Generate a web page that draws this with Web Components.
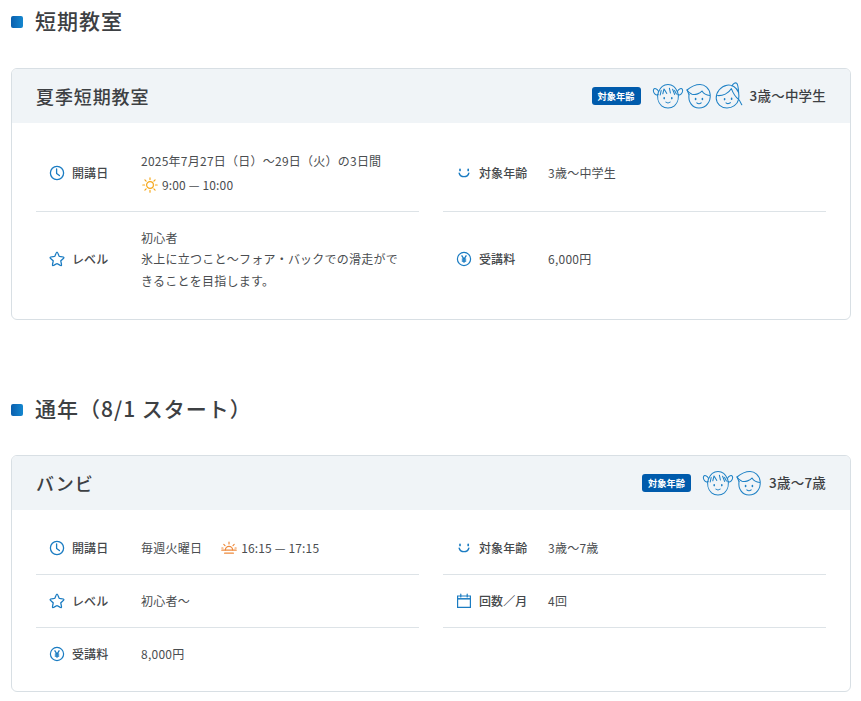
<!DOCTYPE html>
<html lang="ja">
<head>
<meta charset="utf-8">
<title>教室</title>
<style>
  html, body { margin: 0; background: #fff; }
  body {
    padding: 0 10px 8px 11px;
    font-family: "Noto Sans CJK JP", "Noto Sans", sans-serif;
    color: #3d4043;
  }
  .inline .time { display: inline-flex; align-items: center; gap: 4px; margin-left: 19px; letter-spacing: .15px; }
</style>
</head>
<body>
  <section-title style="--top: 5px">短期教室</section-title>
  <course-card title="夏季短期教室" faces="girl boy teen" age="3歳〜中学生" style="--mt: 33px; --pb: 13px; --row-pad: 15px">
    <info-row icon="clock" label="開講日">
      <div>2025年7月27日（日）〜29日（火）の3日間</div>
      <div class="time"><ui-icon name="sun"></ui-icon>9:00 — 10:00</div>
    </info-row>
    <info-row icon="smile" label="対象年齢">3歳〜中学生</info-row>
    <info-row icon="star" label="レベル" last>
      <div>初心者</div>
      <div>氷上に立つこと〜フォア・バックでの滑走ができることを目指します。</div>
    </info-row>
    <info-row icon="yen" label="受講料" last>6,000円</info-row>
  </course-card>

  <section-title style="--top: 72.6px">通年（8/1 スタート）</section-title>
  <course-card title="バンビ" faces="girl boy" age="3歳〜7歳" style="--mt: 32px; --pb: 11px">
    <info-row icon="clock" label="開講日">
      <span class="inline">毎週火曜日<span class="time"><ui-icon name="sunset"></ui-icon>16:15 — 17:15</span></span>
    </info-row>
    <info-row icon="smile" label="対象年齢">3歳〜7歳</info-row>
    <info-row icon="star" label="レベル">初心者〜</info-row>
    <info-row icon="calendar" label="回数／月">4回</info-row>
    <info-row icon="yen" label="受講料" last>8,000円</info-row>
  </course-card>

<script>
const ICONS = {
  clock: '<svg viewBox="0 0 16 16" width="16" height="16" fill="none" stroke="#1b7cc2" stroke-width="1.3"><circle cx="8" cy="8" r="6.6"/><path d="M7.6 3.8V8.4L10.4 10.6" stroke-linecap="round" stroke-linejoin="round"/></svg>',
  smile: '<svg viewBox="0 0 16 16" width="16" height="16" fill="none" stroke="#1b7cc2" stroke-width="1.4" stroke-linecap="round"><path d="M3.2 8.2C4.5 12.8 11.5 12.8 12.8 8.2"/><path d="M4 4.4V5.4M12.2 4.4V5.4" stroke-width="1.7"/></svg>',
  star: '<svg viewBox="0 0 16 16" width="16" height="16" fill="none" stroke="#1b7cc2" stroke-width="1.3" stroke-linejoin="round"><path d="M8 1.2C8.7 1.2 9.9 5 10.2 5.3C10.6 5.6 14.8 5.6 15 6.4C15.2 7.1 12 9.3 11.8 9.8C11.6 10.3 13 14 12.4 14.5C11.8 15 8.6 12.6 8 12.6C7.4 12.6 4.2 15 3.6 14.5C3 14 4.4 10.3 4.2 9.8C4 9.3 .8 7.1 1 6.4C1.2 5.6 5.4 5.6 5.8 5.3C6.1 5 7.3 1.2 8 1.2Z"/></svg>',
  yen: '<svg viewBox="0 0 16 16" width="16" height="16" fill="none" stroke="#1b7cc2" stroke-width="1.2"><circle cx="8" cy="8" r="6.6"/><path d="M5.6 4.4L8 8L10.4 4.4M8 8V11.8M5.8 8.2H10.2M5.8 10H10.2" stroke-width="1.3"/></svg>',
  calendar: '<svg viewBox="0 0 16 16" width="16" height="16" fill="none" stroke="#1b7cc2" stroke-width="1.2"><path d="M1.6 3H14.4V14.4H1.6Z"/><path d="M1.6 5.8H14.4" stroke-width="1.5"/><path d="M4.8 1.2V4M11.2 1.2V4" stroke-linecap="round"/></svg>',
  sun: '<svg viewBox="0 0 16 16" width="16" height="16" fill="none" stroke="#f5a81c" stroke-width="1.2" stroke-linecap="round"><circle cx="8" cy="8" r="3.4"/><path d="M8 .8V2.6M8 13.4V15.2M.8 8H2.6M13.4 8H15.2M2.9 2.9L4.1 4.1M11.9 11.9L13.1 13.1M2.9 13.1L4.1 11.9M11.9 4.1L13.1 2.9"/></svg>',
  sunset: '<svg viewBox="0 0 16 16" width="16" height="16" fill="none" stroke="#ee8a3c" stroke-width="1.2" stroke-linecap="round"><path d="M4.4 10A3.6 3.6 0 0 1 11.6 10"/><path d="M.8 10.2H15.2M3.6 13.2H12.4"/><path d="M8 2V4M2.8 4.4L4 5.6M13.2 4.4L12 5.6M.8 8H2M14 8H15.2"/></svg>'
};

// 似顔絵は線だけで描く
const FACES = {
  girl: { w: 30, svg: `
    <path d="M5.4 9C7.4 4 11.4 1.4 15 1.4C18.6 1.4 22.6 4 24.6 9C26.2 14 25 19.6 21.4 22.8C17.8 25.8 12.2 25.8 8.6 22.8C5 19.6 3.8 14 5.4 9Z"/>
    <path d="M5.6 8.4C4 5.4 1.4 4.8 .6 6.4C-.2 8 1 11 3 11.8C4 12.2 4.6 12 5 11.4"/>
    <path d="M24.4 8.4C26 5.4 28.6 4.8 29.4 6.4C30.2 8 29 11 27 11.8C26 12.2 25.4 12 25 11.4"/>
    <path d="M8.2 7.4L7.2 12M11 6L9.8 10.8M11.4 6.4L13.8 10.4M16.4 5.2L17.4 10M19.6 6.2L21.6 11.4M21.6 7.4L23.4 11"/>
    <path d="M11.2 14.8V15.6M18.8 14.8V15.6" stroke-width="1.6"/>
    <path d="M12.8 19C14 20.2 16 20.2 17.2 19"/>` },
  boy: { w: 26, svg: `
    <path d="M3 11.6C2 18.4 6 25 13 25C20.4 25 24.8 18.4 24.2 11.6C23.6 5 18.6 1.4 14 1.4C9.6 1.4 5 3.6 1 7C2.4 9.2 4 10.6 6 11.2C9.6 12 14 10.6 16 8C17.6 10.6 20.8 12.2 23.8 12.4"/>
    <path d="M3 11.6L1 7"/>
    <path d="M9.6 15.6V16.4M16.4 15.6V16.4" stroke-width="1.6"/>
    <path d="M10.8 19.8C12 21 14 21 15.2 19.8"/>` },
  teen: { w: 28, svg: `
    <path d="M23.6 9.6C21.6 4 16.6 1.4 12 2.2C6 3.2 1 9 1.2 15.2C1.4 21 6.6 25 12 25C17.4 25 22.4 21.6 23.6 16.4"/>
    <path d="M2.6 12.6C7.6 13 13.6 10.6 16.4 5.6C18 10 20.6 14 23.6 16.4C24.8 17.6 25.8 20 26.8 21.8"/>
    <path d="M17 3C18 .4 20.6 -.8 21.8 .4C23.2 1.8 23.4 6.6 23.6 9.6C24 11.6 24 13.6 23.6 16.4"/>
    <path d="M9.6 15.8V16.6M16.6 15.4V16.2" stroke-width="1.6"/>
    <path d="M11 19.8C12.4 21 14.4 20.8 15.4 19.6"/>` }
};

class UiIcon extends HTMLElement {
  connectedCallback() {
    this.attachShadow({ mode: 'open' });
    this.shadowRoot.innerHTML = `
      <style>
        :host { display: inline-flex; flex: none; }
        svg { display: block; width: var(--size, 16px); height: var(--size, 16px); }
      </style>
      ${ICONS[this.getAttribute('name')]}
    `;
  }
}
customElements.define('ui-icon', UiIcon);

class SectionTitle extends HTMLElement {
  connectedCallback() {
    this.attachShadow({ mode: 'open' });
    this.shadowRoot.innerHTML = `
      <style>
        :host {
          display: flex;
          align-items: center;
          gap: 12px;
          margin-top: var(--top, 0);
          font-size: 21px;
          font-weight: 500;
          line-height: 30px;
          letter-spacing: 1px;
          color: #3d4043;
        }
        .mark {
          width: 12px;
          height: 12px;
          margin-top: 4px;
          border-radius: 2px;
          background: linear-gradient(90deg, #0a5fae, #1487cf);
        }
      </style>
      <span class="mark"></span>
      <span><slot></slot></span>
    `;
  }
}
customElements.define('section-title', SectionTitle);

class AgeFaces extends HTMLElement {
  connectedCallback() {
    this.attachShadow({ mode: 'open' });
    const faces = (this.getAttribute('faces') || '').split(' ').map(k => {
      const f = FACES[k];
      return `<svg viewBox="0 0 ${f.w} 26" width="${f.w}" height="26" fill="none" stroke="#1f82c6" stroke-width="1.05" stroke-linecap="round" stroke-linejoin="round">${f.svg}</svg>`;
    }).join('');
    this.shadowRoot.innerHTML = `
      <style>
        :host { display: flex; align-items: center; gap: 3px; }
        svg { display: block; overflow: visible; }
      </style>
      ${faces}
    `;
  }
}
customElements.define('age-faces', AgeFaces);

class CourseCard extends HTMLElement {
  connectedCallback() {
    this.attachShadow({ mode: 'open' });
    this.shadowRoot.innerHTML = `
      <style>
        :host {
          display: block;
          margin-top: var(--mt, 0);
          border: 1px solid #d8dfe4;
          border-radius: 6px;
          overflow: hidden;
          background: #fff;
        }
        header {
          display: flex;
          align-items: center;
          height: 54px;
          padding: 0 24px;
          background: #f0f4f7;
        }
        h2 {
          margin: 0;
          margin-right: auto;
          font-size: 18px;
          font-weight: 500;
          letter-spacing: .9px;
          color: #3d4043;
        }
        .badge {
          padding: 0 6px;
          height: 18px;
          line-height: 18px;
          border-radius: 3px;
          background: #005bac;
          color: #fff;
          font-size: 9.25px;
          font-weight: 700;
          margin-right: 12px;
        }
        .age {
          margin: 0 0 2px 7px;
          font-size: 13.5px;
          font-weight: 500;
          letter-spacing: .2px;
          color: #3d4043;
        }
        .body {
          display: grid;
          grid-template-columns: 1fr 1fr;
          column-gap: 24px;
          padding: 12px 24px var(--pb, 12px);
        }
      </style>
      <header>
        <h2>${this.getAttribute('title')}</h2>
        <span class="badge">対象年齢</span>
        <age-faces faces="${this.getAttribute('faces')}"></age-faces>
        <span class="age">${this.getAttribute('age')}</span>
      </header>
      <div class="body"><slot></slot></div>
    `;
    this.removeAttribute('title');
  }
}
customElements.define('course-card', CourseCard);

class InfoRow extends HTMLElement {
  connectedCallback() {
    this.attachShadow({ mode: 'open' });
    this.shadowRoot.innerHTML = `
      <style>
        :host {
          display: flex;
          align-items: center;
          padding: var(--row-pad, 15.2px) 0 var(--row-pad, 15.2px) 13px;
          border-bottom: 1px solid #dde3e7;
          font-size: 12px;
          line-height: 21.6px;
          letter-spacing: .24px;
          color: #4a4d50;
        }
        :host([last]) { border-bottom: 0; }
        .label {
          display: flex;
          align-items: center;
          gap: 7px;
          flex: none;
          width: 92px;
          font-weight: 500;
          letter-spacing: .1px;
          color: #45484b;
        }
        .value { flex: 1; min-width: 0; padding-right: 12px; }
        ::slotted(.time) {
          display: flex;
          align-items: center;
          gap: 4px;
          height: 22px;
          margin: 2px 0 0 1px;
          letter-spacing: .15px;
        }
        ::slotted(.inline) { display: flex; align-items: center; }
      </style>
      <div class="label"><ui-icon name="${this.getAttribute('icon')}"></ui-icon>${this.getAttribute('label')}</div>
      <div class="value"><slot></slot></div>
    `;
  }
}
customElements.define('info-row', InfoRow);
</script>
</body>
</html>
